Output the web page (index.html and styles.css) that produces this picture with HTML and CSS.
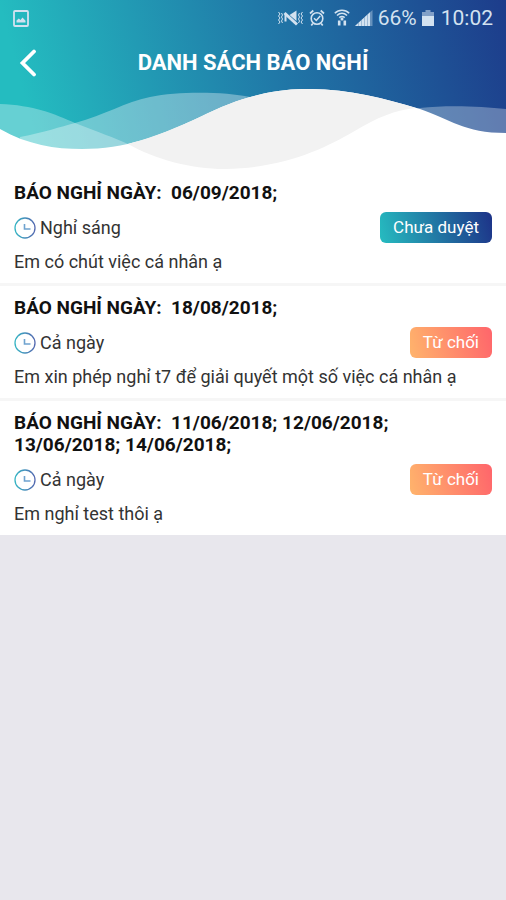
FILE: index.html
```html
<!DOCTYPE html>
<html lang="vi">
<head>
  <meta charset="UTF-8">
  <meta name="viewport" content="width=device-width, initial-scale=1">
  <title>Danh sách báo nghỉ</title>
  <link rel="stylesheet" href="styles.css">
</head>
<body>
  <svg class="defs" width="0" height="0" aria-hidden="true">
    <defs>
      <linearGradient id="clock-gradient" x1="0" y1="0" x2="1" y2="0">
        <stop offset="0" stop-color="#35b5c4"/>
        <stop offset="1" stop-color="#5468b0"/>
      </linearGradient>
      <symbol id="clock" viewBox="0 0 22 22">
        <circle cx="11" cy="11" r="10" fill="none" stroke="url(#clock-gradient)" stroke-width="1.3"/>
        <path d="M10.5 7v5h6" fill="none" stroke="#6fa3cf" stroke-width="1.6"/>
      </symbol>
    </defs>
  </svg>

  <header class="header">
    <div class="status-bar">
      <svg width="16" height="17" viewBox="0 0 16 17">
        <rect x="1" y="1" width="14" height="15" rx="1" fill="none" stroke="currentColor" stroke-width="1.8"/>
        <path d="M3.5 12.5v-2l2.3-2 1.7 1.5 2-2.6 3 3.4v1.7z" fill="currentColor"/>
      </svg>
      <div class="status-right">
        <!-- vibrate / muted -->
        <svg width="27" height="18" viewBox="0 0 27 18">
          <path d="M1.5 3L3 5 1.5 7 3 9l-1.500 2L3 13l-1.500 2M4.500 4l1 2-1 2 1 2-1 2 1 2M25.500 3L24 5l1.500 2L24 9l1.500 2L24 13l1.500 2M22.500 4l-1 2 1 2-1 2 1 2-1 2" fill="none" stroke="currentColor"/>
          <path d="M12.500 6L19.500 1.500V12z" fill="currentColor"/>
          <path d="M7.500 5.500h2v7h-2z" fill="currentColor"/>
          <path d="M7.500 4L20 15.500" stroke="currentColor" stroke-width="3"/>
        </svg>
        <!-- alarm -->
        <svg width="16" height="18" viewBox="0 0 16 18">
          <circle cx="8" cy="9.5" r="5.8" fill="none" stroke="currentColor" stroke-width="1.6"/>
          <path d="M1 4.5l3.3-3M15 4.5l-3.3-3M3.8 14.5l-1.5 2M12.2 14.5l1.5 2" stroke="currentColor" stroke-width="1.7"/>
          <path d="M5 9.2l2.3 2.3L11.2 7" fill="none" stroke="currentColor" stroke-width="1.5"/>
        </svg>
        <!-- wifi -->
        <svg class="wifi" width="16" height="18" viewBox="0 0 16 18">
          <path d="M.8 4.2c4-4 10.4-4 14.4 0M3 6.5c3-2.8 7-2.8 10 0M5.3 8.7c1.6-1.4 3.8-1.4 5.4 0" fill="none" stroke="currentColor" stroke-width="1.6"/>
          <path d="M8 8l1.8 2L8 12l-1.8-2z" fill="currentColor"/>
          <path d="M5.2 11.5v5M10.8 11.5v5" stroke="currentColor" stroke-width="2.6"/>
        </svg>
        <!-- signal -->
        <svg width="18" height="18" viewBox="0 0 18 18">
          <path d="M0 17L17.5 1v16z" fill="currentColor" opacity=".4"/>
          <path d="M0 17l3-2.700V17zM3.500 17v-3.200L6 11.500V17zM6.500 17v-6L9 8.800V17zM9.500 17V8.300L12 6v11zM12.500 17V5.600L15 3.300V17z" fill="currentColor"/>
        </svg>
        <span>66%</span>
        <!-- battery -->
        <svg class="battery" width="12" height="18" viewBox="0 0 12 18">
          <path d="M3.5 1h5v2H12v4H0V3h3.500z" fill="currentColor" opacity=".55"/>
          <path d="M0 7h12v10H0z" fill="currentColor"/>
        </svg>
        <span>10:02</span>
      </div>
    </div>

    <div class="title-bar">
      <button class="back-btn" type="button" aria-label="Quay lại">
        <svg width="18" height="28" viewBox="0 0 18 28">
          <path d="M15 2.500L3.500 14 15 25.500" fill="none" stroke="currentColor" stroke-width="3.8" stroke-linecap="round"/>
        </svg>
      </button>
      <h1 class="page-title">DANH SÁCH BÁO NGHỈ</h1>
    </div>

    <svg class="waves" viewBox="0 0 506 81" preserveAspectRatio="none" aria-hidden="true">
      <path d="M0 14C33 15 55 24 75 33C98 42 115 48 128 54C155 69 190 79 225 79C285 78 325 58 353 42C378 27 395 20 420 18C445 15 480 16 506 19V81H0z" fill="#fff" opacity=".3"/>
      <path d="M20 47C45 42 60 37 75 33C105 25 125 12 150 7C180 1 225 2 250 7V81H20z" fill="#fff" opacity=".34"/>
      <path d="M0 39C28 55 55 59 82 59C125 59 160 46 200 27C220 17 240 9 258 5C277 0 293-1 310-1C350-1 386 9 420 19C450 29 464 43 506 43V81H0z" fill="#fff"/>
      <path d="M128 54C155 47 178 37 200 27C220 17 240 9 258 5C277 0 293-1 310-1C350-1 386 9 416 18C395 20 378 27 353 42C325 58 285 78 225 79C190 79 155 69 128 54z" fill="#f2f2f2"/>
    </svg>
  </header>

  <main class="leave-list">
    <article class="leave-item">
      <h2 class="leave-date">BÁO NGHỈ NGÀY:&nbsp; 06/09/2018;</h2>
      <div class="leave-row">
        <svg class="clock-icon"><use href="#clock"/></svg>
        <span class="leave-time">Nghỉ sáng</span>
        <span class="badge pending">Chưa duyệt</span>
      </div>
      <p class="leave-reason">Em có chút việc cá nhân ạ</p>
    </article>

    <article class="leave-item">
      <h2 class="leave-date">BÁO NGHỈ NGÀY:&nbsp; 18/08/2018;</h2>
      <div class="leave-row">
        <svg class="clock-icon"><use href="#clock"/></svg>
        <span class="leave-time">Cả ngày</span>
        <span class="badge rejected">Từ chối</span>
      </div>
      <p class="leave-reason">Em xin phép nghỉ t7 để giải quyết một số việc cá nhân ạ</p>
    </article>

    <article class="leave-item">
      <h2 class="leave-date">BÁO NGHỈ NGÀY:&nbsp; 11/06/2018; 12/06/2018; 13/06/2018; 14/06/2018;</h2>
      <div class="leave-row">
        <svg class="clock-icon"><use href="#clock"/></svg>
        <span class="leave-time">Cả ngày</span>
        <span class="badge rejected">Từ chối</span>
      </div>
      <p class="leave-reason">Em nghỉ test thôi ạ</p>
    </article>
  </main>
</body>
</html>
```
FILE: styles.css
```css
* {
  margin: 0;
  padding: 0;
  box-sizing: border-box;
}

body {
  font-family: Roboto, "Liberation Sans", sans-serif;
  font-size: 18px;
  line-height: 22px;
  color: #333;
  background: #e8e7ed;
}

.defs {
  position: absolute;
}

/* Header */
.header {
  background: linear-gradient(75deg, #24bcc0 8%, #2079a8 54%, #1d3c8b 100%);
  color: #fff;
}

.status-bar {
  display: flex;
  justify-content: space-between;
  align-items: center;
  height: 36px;
  padding: 0 13px;
  color: #d3e2f0;
}

.status-right {
  display: flex;
  align-items: center;
  gap: 5px;
  font-size: 21px;
}

.wifi {
  margin-left: 4px;
}

.battery {
  margin-right: 2px;
}

/* Title bar */
.title-bar {
  display: grid;
  grid-template-columns: 48px 1fr 48px;
  align-items: center;
  height: 54px;
}

.back-btn {
  display: flex;
  justify-content: center;
  padding: 0 0 0 8px;
  border: none;
  background: none;
  color: #fff;
  cursor: pointer;
}

.page-title {
  font-size: 22px;
  font-weight: 700;
  text-align: center;
}

.waves {
  display: block;
  width: 100%;
  height: 81px;
  overflow: visible;
}

/* Leave list */
.leave-item {
  padding: 11px 14px 10px;
  border-bottom: 3px solid #f6f6f6;
  background: #fff;
}

.leave-item:last-child {
  border-bottom: none;
}

.leave-date {
  font-size: 19px;
  font-weight: 700;
  color: #111;
}

.leave-row {
  display: flex;
  align-items: center;
  margin: 8px 0;
}

.clock-icon {
  width: 22px;
  height: 22px;
  margin-right: 4px;
}

.badge {
  margin-left: auto;
  padding: 0 13px;
  border-radius: 6px;
  font-size: 17px;
  line-height: 31px;
  color: #fff;
}

.pending {
  background: linear-gradient(75deg, #26bcc0, #1d3288);
}

.rejected {
  background: linear-gradient(75deg, #ffb46c, #ff656b);
}
```
